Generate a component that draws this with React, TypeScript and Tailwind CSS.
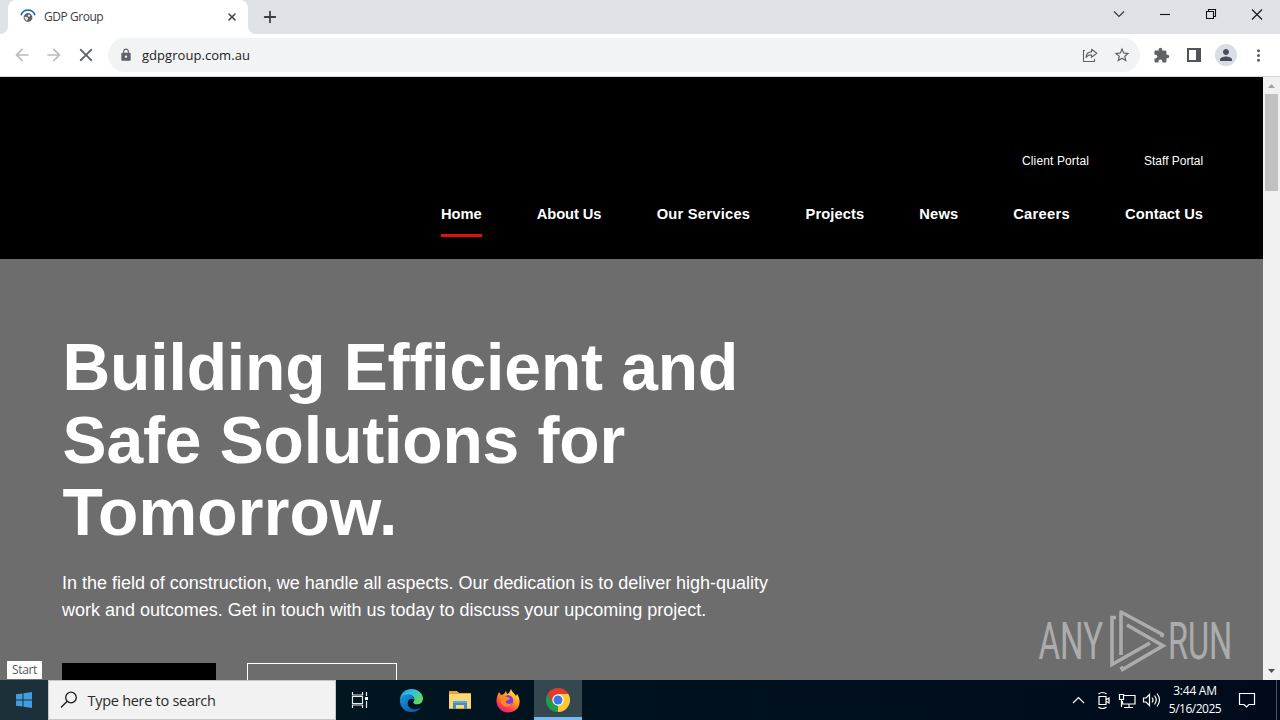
import { X, Plus } from 'lucide-react';
import { MdArrowBack, MdArrowForward, MdClose, MdLock, MdExtension, MdMoreVert, MdPerson, MdStarOutline } from 'react-icons/md';

interface NavItem {
  label: string;
  className: string;
  active?: boolean;
}

const portalLinks: NavItem[] = [
  { label: 'Client Portal', className: 'w-[67px] tracking-[0.13px]' },
  { label: 'Staff Portal', className: 'w-[59px]' },
];

const navItems: NavItem[] = [
  { label: 'Home', className: 'w-[41px]', active: true },
  { label: 'About Us', className: 'w-[65px] tracking-[-0.1px]' },
  { label: 'Our Services', className: 'w-[94px] tracking-[0.25px]' },
  { label: 'Projects', className: 'w-[59px] tracking-[0.12px]' },
  { label: 'News', className: 'w-[39px] tracking-[0.2px]' },
  { label: 'Careers', className: 'w-[57px] tracking-[0.3px]' },
  { label: 'Contact Us', className: 'w-[78px] tracking-[0.05px]' },
];

function Favicon() {
  return (
    <svg width="16" height="16" viewBox="0 0 16 16" fill="none">
      <path d="M1 6.200a7.400 7.400 0 0 1 14 0" stroke="#2472bf" strokeWidth="1.7" />
      <circle cx="8" cy="8.500" r="4.400" fill="#5f6368" />
      <path d="M4.600 7.700l2.600.4 1 1.300-1 2.200c-1.600-.4-2.700-1.900-2.600-3.900zM8.400 5.300l2 1.200-1.200 1.400-1.600-.9z" fill="#e8eaed" />
    </svg>
  );
}

function TabStrip() {
  return (
    <div className="flex h-[34px] bg-[#dee1e6]">
      <div className="w-2 bg-white">
        <div className="h-full w-full rounded-br-lg bg-[#dee1e6]" />
      </div>
      <div className="flex w-60 items-center rounded-t-lg bg-white pr-[10px] pl-3 text-[12px] tracking-[-0.450px] text-[#3c4043]">
        <Favicon />
        <span className="ml-2 flex-1">GDP Group</span>
        <X size={12} strokeWidth={3.2} color="#45494d" />
      </div>
      <div className="w-2 bg-white">
        <div className="h-full w-full rounded-bl-lg bg-[#dee1e6]" />
      </div>
      <div className="flex flex-1 items-center pl-[5px]">
        <Plus size={18} strokeWidth={2.4} color="#3c4043" />
      </div>
      <svg className="h-[34px] w-[180px]" viewBox="0 0 180 34" fill="none" stroke="#111" strokeWidth="1.1">
        <path d="M14 11.500l5 5 5-5" stroke="#333" />
        <path d="M60 14.500h10" />
        <path d="M106.500 11.500h7v7h-7zM108.500 11.500v-2h7v7h-2" />
        <path d="M152 9.500l10 10M162 9.500l-10 10" />
      </svg>
    </div>
  );
}

function Toolbar() {
  return (
    <div className="flex h-[43px] items-center border-b border-[#d5d7da] bg-white text-[#5f6368]">
      <div className="flex w-[108px] items-center gap-[12px] pl-[12px]">
        <MdArrowBack size={20} color="#babcbe" />
        <MdArrowForward size={20} color="#babcbe" />
        <MdClose size={22} color="#5f6368" className="-ml-px" />
      </div>
      <div className="flex h-[34px] w-[1032px] items-center rounded-full bg-[#f1f3f4] pr-[9px] pl-[11px]">
        <MdLock size={14} />
        <span className="mt-[2px] ml-[9px] flex-1 text-[13px] tracking-[0.05px] text-[#202124]">gdpgroup.com.au</span>
        <svg width="16" height="16" viewBox="0 0 16 16" fill="none" stroke="#5f6368" strokeWidth="1.1">
          <path d="M3 3.500H1.500v11h11V12" />
          <path d="M4 10.500c.3-3.700 2.300-5.500 5.500-5.600V2.300l5.300 4-5.300 4V7.700C7.200 7.700 5.500 8.400 4 10.500z" strokeLinejoin="round" />
        </svg>
        <MdStarOutline size={18} className="ml-[15px]" />
      </div>
      <div className="flex flex-1 items-center pl-[13px]">
        <MdExtension size={17} />
        <svg className="ml-4" width="16" height="16" viewBox="0 0 16 16">
          <path d="M1 1h14v14H1zM3 3v10h7V3z" fill="#4f5357" fillRule="evenodd" />
        </svg>
        <div className="ml-[13px] flex size-[22px] items-center justify-center rounded-full bg-[#dadce6]">
          <MdPerson size={18} color="#4a4e5c" />
        </div>
        <MdMoreVert size={19} className="ml-[12px]" />
      </div>
    </div>
  );
}

function SiteHeader() {
  return (
    <header className="flex h-[182px] flex-col items-end bg-black pr-[60px] text-white">
      <div className="mt-[75px] flex gap-[55px] text-[12px] leading-[18px]">
        {portalLinks.map((link) => (
          <a key={link.label} className={`whitespace-nowrap ${link.className}`}>{link.label}</a>
        ))}
      </div>
      <nav className="mt-[32px] flex gap-[54.850px] text-[14.700px] leading-6 font-bold">
        {navItems.map((item) => (
          <a
            key={item.label}
            className={`h-[35px] whitespace-nowrap ${item.className} ${item.active ? 'border-b-[3px] border-[#e01010]' : ''}`}
          >
            {item.label}
          </a>
        ))}
      </nav>
    </header>
  );
}

function Watermark() {
  return (
    <svg className="absolute top-[530px] left-[1030px] overflow-visible" width="225" height="70" viewBox="0 0 225 70" opacity="0.43">
      <g fill="#fff" fontFamily="Roboto, sans-serif" fontSize="52">
        <text transform="translate(8.500 52) scale(0.635 1)">ANY</text>
        <text transform="translate(138 52) scale(0.625 1)">RUN</text>
      </g>
      <g fill="none" stroke="#fff" strokeWidth="3.600">
        <path d="M86 10.500h-4v47L120 36" />
        <path d="M91 48V5l41.500 22.500-1 2.500" strokeLinejoin="round" />
        <path d="M97 18l36 20.700L92.500 62.500l-1.500-3" />
      </g>
    </svg>
  );
}

function Hero() {
  return (
    <section className="h-[421px] overflow-hidden bg-[#6d6d6d] pl-[62px] text-white">
      <h1 className="mt-[72px] w-[760px] pl-[0.500px] text-[66px] leading-[72.600px] font-bold tracking-[-0.120px]">
        Building Efficient and
        <br />
        Safe Solutions for
        <br />
        <span className="tracking-[0.150px]">Tomorrow.</span>
      </h1>
      <p className="mt-[21px] text-[18px] leading-[27px] tracking-[-0.015px]">
        In the field of construction, we handle all aspects. Our dedication is to deliver high-quality
        <br />
        work and outcomes. Get in touch with us today to discuss your upcoming project.
      </p>
      <div className="mt-[39px] flex gap-[31px]">
        <div className="h-12 w-[154px] bg-black" />
        <div className="h-12 w-[150px] border border-white" />
      </div>
    </section>
  );
}

function Scrollbar() {
  return (
    <div className="flex w-[17px] flex-col items-center justify-between bg-[#f1f1f1]">
      <div className="flex flex-col items-center">
        <svg width="17" height="17" viewBox="0 0 17 17">
          <path d="M5 11l3.500-4 3.500 4z" fill="#a3a3a3" />
        </svg>
        <div className="h-[97px] w-[13px] bg-[#c1c1c1]" />
      </div>
      <svg width="17" height="17" viewBox="0 0 17 17">
        <path d="M5 6l3.500 4L12 6z" fill="#505050" />
      </svg>
    </div>
  );
}

function EdgeIcon() {
  return (
    <svg width="25" height="25" viewBox="0 0 26 26">
      <defs>
        <linearGradient id="edgeTop" x1="0" y1="0" x2="1" y2="0.6">
          <stop offset="0" stopColor="#1f9fe0" />
          <stop offset="0.5" stopColor="#2fc2df" />
          <stop offset="1" stopColor="#63d957" />
        </linearGradient>
        <linearGradient id="edgeLow" x1="0" y1="0" x2="1" y2="1">
          <stop offset="0" stopColor="#1a94e0" />
          <stop offset="1" stopColor="#0c4fa0" />
        </linearGradient>
      </defs>
      <path d="M1 13C1 5 7 1 13 1c7 0 12 5 12 10 0 4-3 6-6 6-3 0-4-1-4-2s1-1 1-3c0-3-3-5-6-5-5 0-8 3-9 6z" fill="url(#edgeTop)" />
      <path d="M1 13c1-4 4-6 8-6 4 0 6 2 7 5-4-2-7 0-7 4 0 4 4 6 8 6 2 0 4-.6 6-2-2 3-5 5-10 5C6 25 1 20 1 13z" fill="url(#edgeLow)" />
    </svg>
  );
}

function FolderIcon() {
  return (
    <svg width="24" height="22" viewBox="0 0 24 22">
      <path d="M1 2h8l2 2h12v16H1z" fill="#e8a62c" />
      <path d="M1 5h22v14H1z" fill="#fbd876" />
      <path d="M5 12h14v8h-3v-4H8v4H5z" fill="#3f8fd0" />
      <path d="M5 12h14v2H5z" fill="#5ba7df" />
    </svg>
  );
}

function FirefoxIcon() {
  return (
    <svg width="24" height="25" viewBox="0 0 24 25">
      <defs>
        <linearGradient id="foxBody" x1="0.8" y1="0" x2="0.2" y2="1">
          <stop offset="0" stopColor="#fff04a" />
          <stop offset="0.4" stopColor="#ff9c20" />
          <stop offset="0.75" stopColor="#ff3b50" />
          <stop offset="1" stopColor="#e31587" />
        </linearGradient>
      </defs>
      <path d="M3 4l2 3 3-1 2-3 1 3 2-1 2-4c1 3 3 4 5 7l1-2c2 3 3 6 2.500 9C23 21 18 24.500 12 24.500S1 20 .5 13.500C.3 10 1.500 7 3 4z" fill="url(#foxBody)" />
      <circle cx="12" cy="12.500" r="5.300" fill="#7a3be0" />
      <path d="M4 8c3-1 5 0 7 1l3 1c0 2-3 2-4 3-.5 3 3 4 6 2-2 5-9 5-11 0z" fill="#ff8a1f" />
    </svg>
  );
}

function ChromeIcon() {
  return (
    <svg width="24" height="24" viewBox="0 0 24 24">
      <path d="M12 12L1.600 6A12 12 0 0 1 22.400 6z" fill="#e33b2e" />
      <path d="M12 12L22.400 6A12 12 0 0 1 12 24z" fill="#fcc934" />
      <path d="M12 12L12 24A12 12 0 0 1 1.600 6z" fill="#229b4a" />
      <path d="M12 6h10.400L17 15l-5 9 1-9z" fill="#fcc934" />
      <path d="M1.600 6l5.200 9L12 17.500V12z" fill="#229b4a" />
      <path d="M1.600 6h20.800H12l-5.200 9z" fill="#e33b2e" />
      <circle cx="12" cy="12" r="5.700" fill="#fff" />
      <circle cx="12" cy="12" r="4.500" fill="#3778e8" />
    </svg>
  );
}

function Taskbar() {
  return (
    <footer className="flex h-10 items-center bg-linear-to-r from-[#011a22] to-[#000a1b] text-white">
      <div className="flex h-full w-12 items-center justify-center bg-[#1b3038]">
        <svg width="16" height="16" viewBox="0 0 16 16" fill="#429ce0">
          <path d="M0 2.300L6.500 1.400V7.500H0zM7.500 1.200L16 0V7.500H7.500zM0 8.500H6.500V14.600L0 13.700zM7.500 8.500H16V16L7.500 14.800z" />
        </svg>
      </div>
      <div className="flex h-full w-72 items-center border border-[#c6c6c6] bg-[#f2f2f2] pl-[11px] text-[#2a2a2a]">
        <svg width="18" height="18" viewBox="0 0 18 18" fill="none" stroke="#1c1c1c" strokeWidth="1.300">
          <circle cx="11" cy="6.500" r="5.300" />
          <path d="M7.200 10.300L1 16.500" />
        </svg>
        <span className="mt-[2px] ml-[9.500px] text-[14.500px] tracking-[-0.280px]">Type here to search</span>
      </div>
      <div className="flex h-full w-12 items-center justify-center">
        <svg width="18" height="18" viewBox="0 0 18 18" fill="none" stroke="#e6ecee" strokeWidth="1.200">
          <path d="M1.500 1v3h10V1M1.500 17v-3h10v3M1.500 5.500h10v7h-10zM15.500 1v4M15.500 10v7" />
          <path d="M14 6h3v3h-3z" fill="#fff" stroke="none" />
        </svg>
      </div>
      <div className="flex h-full w-[54px] items-center justify-center"><EdgeIcon /></div>
      <div className="flex h-full w-[44px] items-center justify-center"><FolderIcon /></div>
      <div className="flex h-full w-[52px] items-center justify-center"><FirefoxIcon /></div>
      <div className="flex h-full w-12 items-center justify-center border-b-[3px] border-[#76b9ed] bg-[#35474f] pt-[3px]">
        <ChromeIcon />
      </div>
      <div className="flex-1" />
      <svg width="92" height="40" viewBox="0 0 92 40" fill="none" stroke="#fff" strokeWidth="1.200">
        <path d="M3 23l5.500-5.500L14 23" />
        <path d="M29 16.500h7v8h-7zM36.500 19.500l2.500-1.500v5l-2.500-1.500M28.500 14c2-2 6-2 8 0M28.500 27c2 2 6 2 8 0" />
        <path d="M54 15.500h11v8.500H52.500v-3M59 24v3M54 27.500h9M49.500 14.500h4v5h-4zM51.500 19.500V27" />
        <path d="M73.500 18v4h2.500l3.500 3.500v-11L76 18zM82 17.500q2 2.500 0 5M84.500 15.500q3.500 4.500 0 9M87 13.500q5 6.500 0 13" />
      </svg>
      <div className="w-[66px] text-center text-[12px] leading-[18px]">
        <div className="tracking-[-0.250px]">3:44 AM</div>
        <div className="tracking-[-0.500px]">5/16/2025</div>
      </div>
      <svg className="ml-[10px]" width="18" height="18" viewBox="0 0 18 18" fill="none" stroke="#fff" strokeWidth="1.200">
        <path d="M1.500 2.500h15v11H11l-2.500 2.500L6 13.500H1.500z" />
      </svg>
      <div className="mr-[3px] ml-[20px] h-full w-px bg-[#4a5260]" />
    </footer>
  );
}

export default function App() {
  return (
    <div className="relative h-[720px] w-[1280px] overflow-hidden font-['Open_Sans','Noto_Sans',sans-serif]">
      <TabStrip />
      <Toolbar />
      <div className="flex h-[603px]">
        <main className="relative w-[1263px] font-['Liberation_Sans',Arial,sans-serif]">
          <SiteHeader />
          <Hero />
          <Watermark />
        </main>
        <Scrollbar />
      </div>
      <Taskbar />
      <div className="absolute top-[661px] left-[7px] flex h-[18px] w-[35px] items-center justify-center bg-white text-[12px] tracking-[-0.300px] text-[#575757]">
        Start
      </div>
    </div>
  );
}
